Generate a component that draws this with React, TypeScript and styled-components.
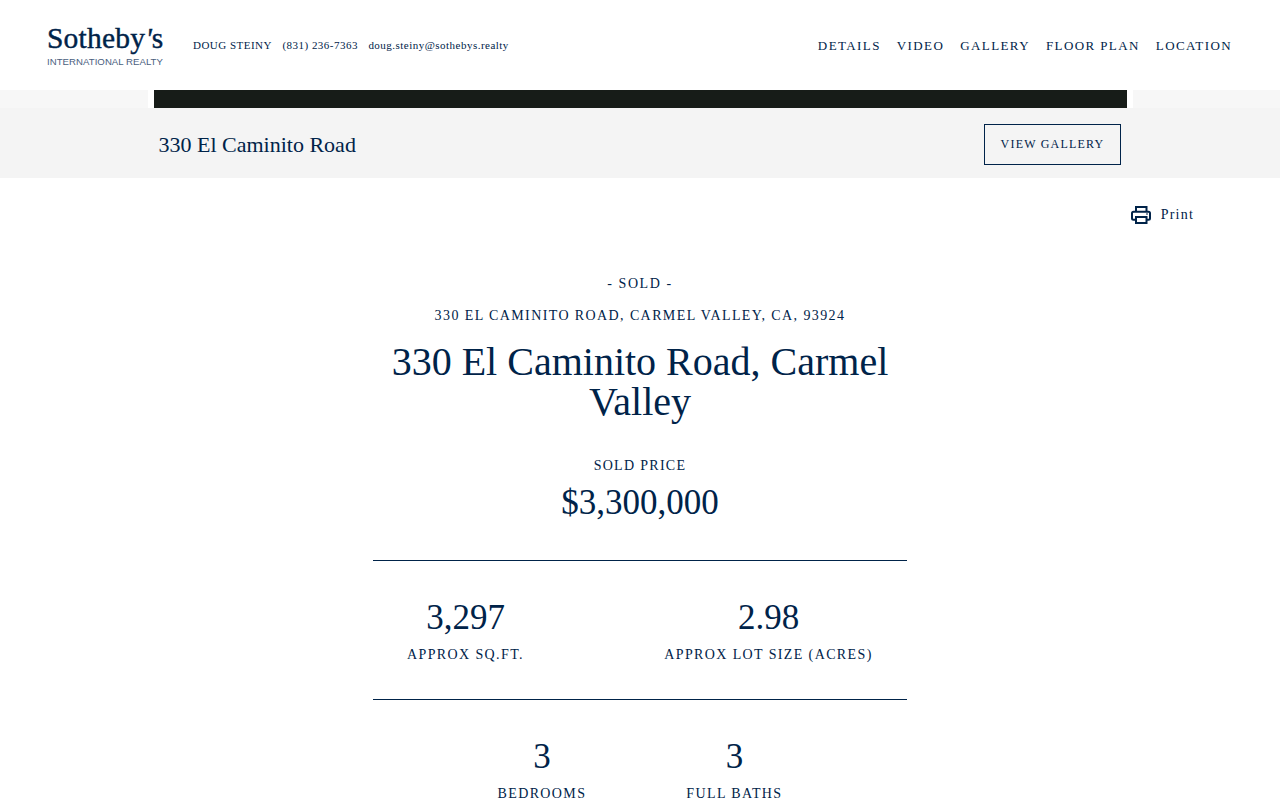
import React from 'react';
import styled, { createGlobalStyle } from 'styled-components';

const NAVY = '#002349';

const GlobalStyle = createGlobalStyle`
    html, body {
        margin: 0;
        padding: 0;
        height: 800px;
        overflow: hidden;
        background: #fff;
        color: ${NAVY};
        font-family: "Liberation Serif", "Times New Roman", serif;
    }
`;

const Header = styled.header`
    height: 90px;
    display: flex;
    align-items: center;
    justify-content: space-between;
    padding: 0 48px 0 47px;
`;

const HeaderLeft = styled.div`
    display: flex;
    align-items: center;
`;

const Logo = styled.a`
    display: flex;
    flex-direction: column;
    width: 117px;
    margin-right: 29px;
`;

const LogoName = styled.span`
    font-size: 29.5px;
    line-height: 30px;
    font-weight: 400;
    letter-spacing: 0.2px;
    -webkit-text-stroke: 0.4px ${NAVY};
    white-space: nowrap;

    i {
        font-style: italic;
        margin: 0 -0.5px 0 0.5px;
    }
`;

const LogoSub = styled.span`
    font-family: "Liberation Sans", Arial, sans-serif;
    font-size: 9.6px;
    line-height: 12px;
    margin-top: 3px;
    letter-spacing: 0.05px;
    color: #4a6080;
    white-space: nowrap;
`;

const Contact = styled.div`
    display: flex;
    gap: 10.5px;
    font-size: 11px;
    letter-spacing: 0.48px;
    white-space: nowrap;
`;

const Nav = styled.nav`
    display: flex;
    gap: 16px;
    padding-top: 1px;
`;

const NavItem = styled.a`
    font-size: 13px;
    letter-spacing: 1.4px;
    white-space: nowrap;
`;

const HeroStrip = styled.div`
    height: 18px;
    display: grid;
    grid-template-columns: 148px 979px 1fr;
    background: #fff;
`;

const HeroSide = styled.div`
    background: #f7f7f7;
    &:last-child {
        margin-left: 6px;
    }
`;

const HeroImage = styled.div`
    background: #171c18;
    margin-left: 6px;
`;

const TitleBar = styled.div`
    height: 70px;
    background: #f4f4f4;
    display: flex;
    align-items: center;
    justify-content: space-between;
    padding: 2px 159px 0 158.5px;
    box-sizing: border-box;
`;

const TitleBarName = styled.h2`
    margin: 0;
    font-size: 22px;
    font-weight: 400;
    padding-top: 2px;
`;

const GalleryButton = styled.button`
    width: 137px;
    height: 41px;
    background: transparent;
    border: 1px solid ${NAVY};
    color: ${NAVY};
    font-family: inherit;
    font-size: 12px;
    letter-spacing: 1.2px;
    padding: 0;
`;

const PrintRow = styled.div`
    display: flex;
    justify-content: flex-end;
    align-items: center;
    gap: 10px;
    height: 20px;
    padding: 27px 86px 0 0;
    font-size: 14px;
    letter-spacing: 1.2px;
`;

const Main = styled.main`
    width: 534px;
    margin: 0 auto;
    text-align: center;
    padding-top: 50px;
`;

const Status = styled.div`
    font-size: 14px;
    line-height: 18px;
    letter-spacing: 1.55px;
`;

const Address = styled.div`
    font-size: 14px;
    line-height: 18px;
    letter-spacing: 1.4px;
    margin-top: 14px;
`;

const Headline = styled.h1`
    margin: 17px 0 0;
    font-size: 40px;
    line-height: 40px;
    font-weight: 400;
`;

const PriceLabel = styled.div`
    font-size: 14px;
    line-height: 18px;
    letter-spacing: 1.3px;
    margin-top: 35px;
`;

const Price = styled.div`
    font-size: 35px;
    line-height: 40px;
    margin-top: 8px;
`;

const StatsRow = styled.div`
    display: flex;
    border-top: 1px solid ${NAVY};
    border-bottom: 1px solid ${NAVY};
    margin-top: 37px;
    height: 138px;
    box-sizing: content-box;
`;

const Stat = styled.div<{ $width: number; $offset?: number }>`
    width: ${(p) => p.$width}px;
    margin-left: ${(p) => p.$offset ?? 0}px;
    padding-top: 37px;
`;

const StatValue = styled.div`
    font-size: 35px;
    line-height: 40px;
`;

const StatLabel = styled.div`
    font-size: 14px;
    line-height: 18px;
    letter-spacing: 1.38px;
    margin-top: 8px;
    white-space: nowrap;
`;

const RoomsRow = styled.div`
    display: flex;
    justify-content: center;
    gap: 100px;
`;

const Room = styled.div`
    margin-top: 37px;
`;

const PrinterIcon = () => (
    <svg width="20" height="18" viewBox="0 0 20 18" fill="none" stroke={NAVY} strokeWidth="2">
        <path d="M5 5.5V1h10.5v4.5" />
        <path d="M5 13.7H2.5A1.5 1.5 0 0 1 1 12.2V7.2a1.5 1.5 0 0 1 1.5-1.5h15A1.5 1.5 0 0 1 19 7.2v5a1.5 1.5 0 0 1-1.5 1.5h-2" />
        <rect x="5" y="11" width="10.5" height="6" />
        <rect x="15" y="7.5" width="2" height="1" fill={NAVY} stroke="none" />
    </svg>
);

const navLinks = ['DETAILS', 'VIDEO', 'GALLERY', 'FLOOR PLAN', 'LOCATION'];

const App = () => {
    return (
        <>
            <GlobalStyle />
            <Header>
                <HeaderLeft>
                    <Logo>
                        <LogoName>Sotheby<i>'</i>s</LogoName>
                        <LogoSub>INTERNATIONAL REALTY</LogoSub>
                    </Logo>
                    <Contact>
                        <span>DOUG STEINY</span>
                        <span>(831) 236-7363</span>
                        <span>doug.steiny@sothebys.realty</span>
                    </Contact>
                </HeaderLeft>
                <Nav>
                    {navLinks.map((link) => (
                        <NavItem key={link}>{link}</NavItem>
                    ))}
                </Nav>
            </Header>
            <HeroStrip>
                <HeroSide />
                <HeroImage />
                <HeroSide />
            </HeroStrip>
            <TitleBar>
                <TitleBarName>330 El Caminito Road</TitleBarName>
                <GalleryButton>VIEW GALLERY</GalleryButton>
            </TitleBar>
            <PrintRow>
                <PrinterIcon />
                <span>Print</span>
            </PrintRow>
            <Main>
                <Status>- SOLD -</Status>
                <Address>330 EL CAMINITO ROAD, CARMEL VALLEY, CA, 93924</Address>
                <Headline>330 El Caminito Road, Carmel Valley</Headline>
                <PriceLabel>SOLD PRICE</PriceLabel>
                <Price>$3,300,000</Price>
                <StatsRow>
                    <Stat $width={185}>
                        <StatValue>3,297</StatValue>
                        <StatLabel>APPROX SQ.FT.</StatLabel>
                    </Stat>
                    <Stat $width={277} $offset={72}>
                        <StatValue>2.98</StatValue>
                        <StatLabel>APPROX LOT SIZE (ACRES)</StatLabel>
                    </Stat>
                </StatsRow>
                <RoomsRow>
                    <Room>
                        <StatValue>3</StatValue>
                        <StatLabel>BEDROOMS</StatLabel>
                    </Room>
                    <Room>
                        <StatValue>3</StatValue>
                        <StatLabel>FULL BATHS</StatLabel>
                    </Room>
                </RoomsRow>
            </Main>
        </>
    );
};

export default App;
